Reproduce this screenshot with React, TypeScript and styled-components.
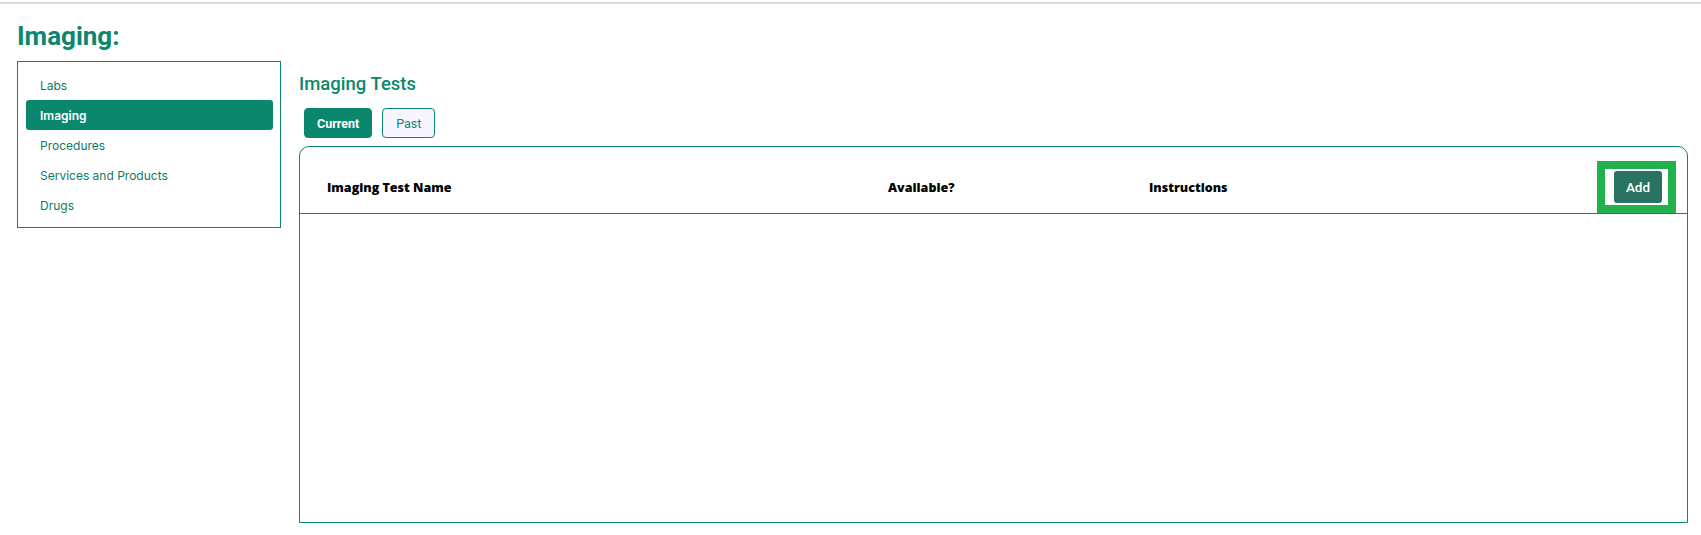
import styled, { createGlobalStyle } from 'styled-components';

const TEAL = '#0b876e';

const GlobalStyle = createGlobalStyle`
	html, body {
		margin: 0;
		padding: 0;
		background: #ffffff;
	}
	body {
		font-family: Roboto, 'Liberation Sans', sans-serif;
	}
`;

type NavItem = { label: string; active?: boolean };

const navItems: NavItem[] = [
	{ label: 'Labs' },
	{ label: 'Imaging', active: true },
	{ label: 'Procedures' },
	{ label: 'Services and Products' },
	{ label: 'Drugs' },
];

const columns = ['Imaging Test Name', 'Available?', 'Instructions'];

const App = () => (
	<>
		<GlobalStyle />
		<TopRule />
		<Page>
			<Title>Imaging:</Title>
			<Content>
				<SideNav>
					{navItems.map((item) => (
						<NavLink key={item.label} $active={item.active}>
							{item.label}
						</NavLink>
					))}
				</SideNav>
				<Main>
					<SectionTitle>Imaging Tests</SectionTitle>
					<Tabs>
						<TabButton $active>Current</TabButton>
						<TabButton>Past</TabButton>
					</Tabs>
					<TableCard>
						<HeaderRow>
							{columns.map((c) => (
								<HeaderCell key={c}>{c}</HeaderCell>
							))}
							<Highlight>
								<AddButton>Add</AddButton>
							</Highlight>
						</HeaderRow>
						<TableBody />
					</TableCard>
				</Main>
			</Content>
		</Page>
	</>
);

export default App;

// Styled Components
const TopRule = styled.div`
	margin-top: 2px;
	height: 2px;
	background: #dedede;
`;

const Page = styled.div`
	padding: 0 13px 0 17px;
`;

const Title = styled.h1`
	margin: 17px 0 0;
	font-family: Roboto, 'Liberation Sans', sans-serif;
	font-size: 26px;
	line-height: 30px;
	font-weight: 700;
	color: ${TEAL};
`;

const Content = styled.div`
	display: flex;
	align-items: flex-start;
	gap: 18px;
	margin-top: 10px;
`;

const SideNav = styled.nav`
	width: 264px;
	box-sizing: border-box;
	border: 1px solid ${TEAL};
	padding: 8px 7px 7px 8px;
	display: flex;
	flex-direction: column;
`;

const NavLink = styled.div<{ $active?: boolean }>`
	height: 30px;
	display: flex;
	align-items: center;
	padding-left: 14px;
	border-radius: 3px;
	font-family: Inter, 'Open Sans', sans-serif;
	font-size: 12px;
	font-weight: ${(p) => (p.$active ? 600 : 400)};
	color: ${(p) => (p.$active ? '#ffffff' : '#0d7a66')};
	background: ${(p) => (p.$active ? TEAL : 'transparent')};
`;

const Main = styled.div`
	flex: 1;
	display: flex;
	flex-direction: column;
`;

const SectionTitle = styled.h2`
	margin: 11px 0 0;
	font-family: Roboto, 'Liberation Sans', sans-serif;
	font-size: 18.5px;
	line-height: 24px;
	font-weight: 500;
	color: ${TEAL};
`;

const Tabs = styled.div`
	display: flex;
	gap: 10px;
	margin: 12px 0 0 5px;
`;

const TabButton = styled.button<{ $active?: boolean }>`
	height: 30px;
	box-sizing: border-box;
	padding: 0 ${(p) => (p.$active ? 12 : 13)}px;
	border-radius: 4px;
	border: 1px solid ${TEAL};
	background: ${(p) => (p.$active ? TEAL : '#f7f5ff')};
	color: ${(p) => (p.$active ? '#ffffff' : TEAL)};
	font-family: Roboto, 'Liberation Sans', sans-serif;
	font-size: 12.5px;
	font-weight: ${(p) => (p.$active ? 700 : 400)};
`;

const TableCard = styled.div`
	margin-top: 8px;
	height: 377px;
	box-sizing: border-box;
	border: 1px solid ${TEAL};
	border-radius: 10px 10px 0 0;
	display: flex;
	flex-direction: column;
`;

const HeaderRow = styled.div`
	display: grid;
	grid-template-columns: 561px 261px 1fr auto;
	align-items: center;
	padding: 14px 11px 0 27px;
	border-bottom: 1px solid ${TEAL};
`;

const HeaderCell = styled.div`
	font-family: 'Open Sans', Roboto, sans-serif;
	font-size: 12.5px;
	font-weight: 800;
	color: #000000;
`;

const Highlight = styled.div`
	border: 8px solid #22b14c;
	padding: 2px 6px 2px 9px;
	display: flex;
`;

const AddButton = styled.button`
	width: 48px;
	height: 32px;
	border: none;
	border-radius: 3px;
	background: #2a7262;
	color: #ffffff;
	font-family: Roboto, 'Liberation Sans', sans-serif;
	font-size: 13.5px;
	font-weight: 500;
`;

const TableBody = styled.div`
	flex: 1;
`;
